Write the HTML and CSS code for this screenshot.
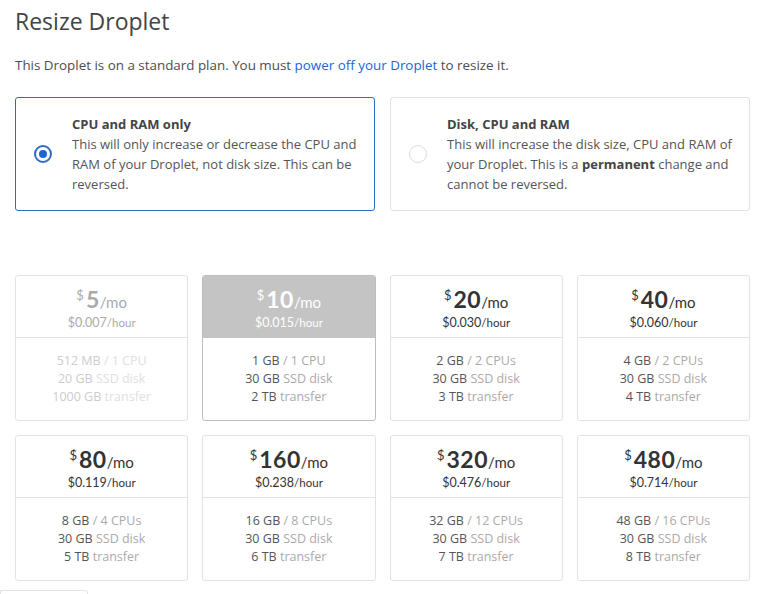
FILE: index.html
```html
<!DOCTYPE html>
<html lang="en">
<head>
    <meta charset="UTF-8">
    <title>Resize Droplet</title>
    <link rel="stylesheet" href="styles.css">
</head>
<body>
    <div class="page">
        <h1 class="title">Resize Droplet</h1>
        <p class="intro">This Droplet is on a standard plan. You must <a href="#">power off your Droplet</a> to resize it.</p>

        <div class="options">
            <div class="option selected">
                <span class="radio"></span>
                <div class="option-text">
                    <div class="option-title">CPU and RAM only</div>
                    <p>This will only increase or decrease the CPU and RAM of your Droplet, not disk size. This can be reversed.</p>
                </div>
            </div>
            <div class="option">
                <span class="radio"></span>
                <div class="option-text">
                    <div class="option-title">Disk, CPU and RAM</div>
                    <p>This will increase the disk size, CPU and RAM of your Droplet. This is a <b>permanent</b> change and cannot be reversed.</p>
                </div>
            </div>
        </div>

        <div class="plans" id="plans"></div>
        <div class="footer-btn"></div>
    </div>

    <script>
        const plans = [
            { mo: 5, hr: "0.007", ram: "512 MB", cpu: "1 CPU", disk: "20 GB", tr: "1000 GB", state: "disabled" },
            { mo: 10, hr: "0.015", ram: "1 GB", cpu: "1 CPU", disk: "30 GB", tr: "2 TB", state: "current" },
            { mo: 20, hr: "0.030", ram: "2 GB", cpu: "2 CPUs", disk: "30 GB", tr: "3 TB" },
            { mo: 40, hr: "0.060", ram: "4 GB", cpu: "2 CPUs", disk: "30 GB", tr: "4 TB" },
            { mo: 80, hr: "0.119", ram: "8 GB", cpu: "4 CPUs", disk: "30 GB", tr: "5 TB" },
            { mo: 160, hr: "0.238", ram: "16 GB", cpu: "8 CPUs", disk: "30 GB", tr: "6 TB" },
            { mo: 320, hr: "0.476", ram: "32 GB", cpu: "12 CPUs", disk: "30 GB", tr: "7 TB" },
            { mo: 480, hr: "0.714", ram: "48 GB", cpu: "16 CPUs", disk: "30 GB", tr: "8 TB" }
        ];

        const grid = document.getElementById("plans");
        plans.forEach(p => {
            const card = document.createElement("div");
            card.className = "plan" + (p.state ? " " + p.state : "");
            card.innerHTML = `
                <div class="plan-head">
                    <div class="price"><span class="cur">$</span><span class="amount">${p.mo}</span><span class="per">/mo</span></div>
                    <div class="hourly">$${p.hr}<span>/hour</span></div>
                </div>
                <div class="plan-body">
                    <div>${p.ram} <span>/ ${p.cpu}</span></div>
                    <div>${p.disk} <span>SSD disk</span></div>
                    <div>${p.tr} <span>transfer</span></div>
                </div>`;
            grid.appendChild(card);
        });
    </script>
</body>
</html>
```

FILE: styles.css
```css
body {
    margin: 0;
    font-family: "Open Sans", Arial, sans-serif;
    color: #4d4d4d;
    background: #fff;
}
.page {
    width: 735px;
    padding: 0 14px 0 15px;
}
.title {
    margin: 0;
    padding-top: 6px;
    font-size: 23px;
    font-weight: 400;
    line-height: 30px;
    color: #444;
}
.intro {
    margin: 20px 0 0;
    font-size: 13.4px;
    line-height: 18px;
}
.intro a {
    color: #1a66d6;
    text-decoration: none;
}
.options {
    display: grid;
    grid-template-columns: 1fr 1fr;
    gap: 15px;
    margin-top: 23px;
}
.option {
    display: flex;
    align-items: center;
    height: 114px;
    box-sizing: border-box;
    border: 1px solid #e2e2e2;
    border-radius: 3px;
    padding: 0 16px 0 18px;
}
.option.selected {
    border-color: #2f6cc6;
}
.radio {
    flex: none;
    width: 16px;
    height: 16px;
    border: 1px solid #dcdcdc;
    border-radius: 50%;
    margin-right: 20px;
    position: relative;
}
.selected .radio {
    border: 2px solid #2f6cc6;
    width: 14px;
    height: 14px;
}
.selected .radio::after {
    content: "";
    position: absolute;
    left: 3px;
    top: 3px;
    width: 8px;
    height: 8px;
    border-radius: 50%;
    background: #1a66d6;
}
.option-text {
    font-size: 13px;
    line-height: 20px;
    color: #555;
}
.option-text p {
    margin: 0;
}
.option-title {
    font-weight: 700;
    color: #444;
}
.option-text b {
    color: #444;
}
.plans {
    display: grid;
    grid-template-columns: repeat(4, 1fr);
    gap: 14px;
    margin-top: 64px;
}
.plan {
    border: 1px solid #e2e2e2;
    border-radius: 3px;
    text-align: center;
    height: 146px;
    box-sizing: border-box;
    overflow: hidden;
}
.plan-head {
    height: 62px;
    border-bottom: 1px solid #e2e2e2;
    padding-top: 10px;
    box-sizing: border-box;
    color: #333;
    font-family: Lato, "Open Sans", sans-serif;
}
.price {
    line-height: 27px;
}
.cur {
    font-size: 13px;
    line-height: 1;
    vertical-align: 8px;
    margin-right: 2px;
}
.amount {
    font-size: 23px;
    font-weight: 700;
    letter-spacing: 0.5px;
}
.per {
    font-size: 15px;
}
.hourly {
    font-size: 12.5px;
    line-height: 14px;
}
.hourly span {
    font-size: 11.5px;
}
.plan-body {
    padding-top: 14px;
    font-size: 12.5px;
    line-height: 18px;
    color: #555;
}
.plan-body span {
    color: #aaa;
}
.plan.disabled .plan-head {
    color: #aaa;
}
.plan.disabled .plan-body div {
    color: #ccc;
}
.plan.disabled .plan-body div span {
    color: #e0e0e0;
}
.plan.current {
    border-color: #bdbdbd;
}
.plan.current .plan-head {
    background: #c4c4c4;
    border-bottom-color: #c4c4c4;
    color: #fff;
}
.footer-btn {
    margin: 9px 0 0 -15px;
    width: 86px;
    height: 10px;
    border: 1px solid #e2e2e2;
    border-radius: 0 3px 0 0;
}
```
